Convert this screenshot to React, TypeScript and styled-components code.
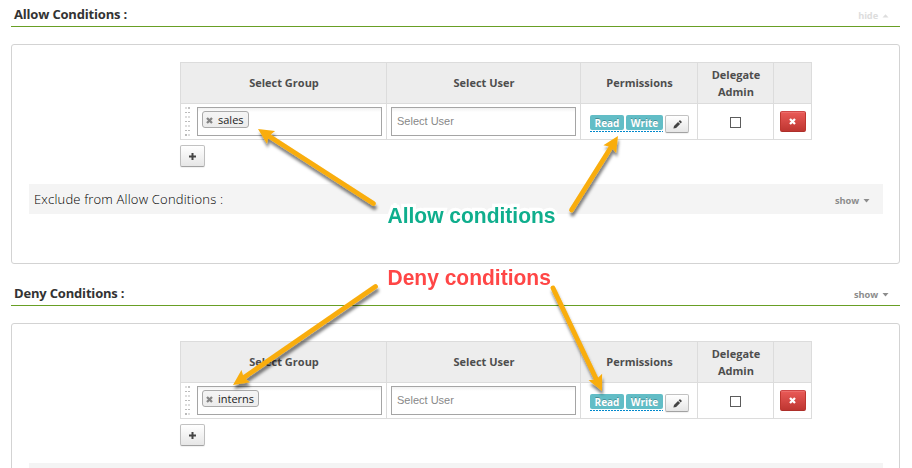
import React from "react";
import styled, { createGlobalStyle } from "styled-components";

const GlobalStyle = createGlobalStyle`
  *, *::before, *::after { box-sizing: border-box; }
  body { margin: 0; background: #fff; overflow: hidden; }
`;

const Page = styled.main`
  position: relative;
  width: 912px;
  height: 468px;
  overflow: hidden;
  padding: 0 12px 0 11px;
  background: #fff;
  color: #333;
  font-family: "Open Sans", sans-serif;
  font-size: 13px;
`;

const Section = styled.section`
  height: 279px;
`;

const SectionHeader = styled.header`
  display: flex;
  justify-content: space-between;
  height: 27px;
  padding: 4px 11px 0 3px;
  border-bottom: 1px solid #689f24;
`;

const SectionTitle = styled.h2`
  margin: 0;
  font-size: 13px;
  line-height: 20px;
  font-weight: 700;
  letter-spacing: -0.18px;
  color: #333;
`;

const Toggle = styled.button<{ $faded?: boolean }>`
  display: flex;
  align-items: center;
  gap: 4px;
  height: 22px;
  padding: 0;
  border: 0;
  background: none;
  font: 700 9.25px/22px "Open Sans", sans-serif;
  letter-spacing: -0.1px;
  color: ${(p) => (p.$faded ? "#dddddd" : "#8c8c8c")};
`;

const HeaderToggle = styled(Toggle)`
  margin-top: 1px;
`;

const Panel = styled.div`
  height: 220px;
  margin-top: 17px;
  padding: 17px 16px 0 17px;
  border: 1px solid #d3d3d3;
  border-radius: 3px;
`;

const Table = styled.div`
  display: grid;
  grid-template-columns: 206px 194px 117px 76px 38px;
  grid-template-rows: 41px 36px;
  width: 632px;
  margin-left: 151px;
  border: 1px solid #dcdcdc;
  border-width: 1px 0 0 1px;
`;

const HeadCell = styled.div<{ $tall?: boolean }>`
  display: flex;
  align-items: center;
  justify-content: center;
  padding: 0 0 ${(p) => (p.$tall ? 0 : 1)}px 1px;
  border: 1px solid #dcdcdc;
  border-width: 0 1px 1px 0;
  background: #ededed;
  color: #4d4d4d;
  font-size: 11px;
  line-height: 17px;
  font-weight: 700;
  text-align: center;
`;

const Cell = styled.div<{ $pad?: string; $center?: boolean }>`
  display: flex;
  align-items: flex-start;
  justify-content: ${(p) => (p.$center ? "center" : "flex-start")};
  padding: ${(p) => p.$pad ?? "3px 4px"};
  border: 1px solid #dcdcdc;
  border-width: 0 1px 1px 0;
`;

const Grip = styled.svg`
  flex: none;
  margin-right: 6px;
`;

const Field = styled.div`
  display: flex;
  align-items: flex-start;
  flex: none;
  width: 185px;
  height: 29px;
  padding: 3px 4px;
  border: 1px solid #a5a5a5;
  background: linear-gradient(#f1f1f1, #fff 4px);
`;

const Placeholder = styled.span`
  padding-left: 1px;
  font: 11px/21px "Liberation Sans", Arial, sans-serif;
  color: #888;
`;

const Tag = styled.span`
  display: flex;
  align-items: center;
  gap: 5px;
  height: 17px;
  padding: 0 4px 0 3px;
  border: 1px solid #aaa;
  border-radius: 3px;
  background: linear-gradient(#f5f5f5, #ececec);
  font-size: 11px;
  line-height: 15px;
  color: #222;
`;

const TagRemove = styled.span`
  display: flex;
  padding-top: 2px;
`;

const Permissions = styled.div`
  display: flex;
  gap: 2px;
  height: 17px;
  margin-right: 2px;
  background: repeating-linear-gradient(90deg, #0088cc 0 2px, transparent 2px 3px) bottom / 100% 1px no-repeat;
`;

const Badge = styled.span<{ $width: number }>`
  width: ${(p) => p.$width}px;
  height: 15px;
  border-radius: 2px;
  background: #62bdc6;
  color: #fff;
  font-size: 10px;
  line-height: 17px;
  font-weight: 700;
  text-align: center;
  text-shadow: 0 -1px 0 rgba(0, 0, 0, 0.25);
`;

const IconButton = styled.button<{ $w: number; $h: number; $danger?: boolean }>`
  display: flex;
  align-items: center;
  justify-content: center;
  width: ${(p) => p.$w}px;
  height: ${(p) => p.$h}px;
  padding: ${(p) => (p.$danger ? "0 1px 0 0" : "0")};
  border: 1px solid;
  border-color: ${(p) => (p.$danger ? "#d04747 #bd362f #ad2f2a" : "#c2c2c2 #bebebe #a2a2a2")};
  border-radius: 2px;
  background: ${(p) => (p.$danger ? "linear-gradient(#ea5a57, #be3631)" : "linear-gradient(#fff, #e6e6e6)")};
  box-shadow: ${(p) => (p.$danger ? "inset 0 1px 0 rgba(255,255,255,.12)" : "0 1px 1px rgba(0,0,0,.06)")};
`;

const AddButton = styled(IconButton)`
  margin: 5px 0 0 151px;
`;

const Checkbox = styled.input`
  appearance: none;
  width: 11px;
  height: 11px;
  margin: 0;
  border: 1px solid #5c5c5c;
  background: #fff;
`;

const ExcludeBar = styled.div`
  display: flex;
  align-items: center;
  justify-content: space-between;
  height: 30px;
  margin-top: 17px;
  padding: 0 13px 0 5px;
  background: #f4f4f4;
`;

const ExcludeTitle = styled.span`
  font-size: 13px;
  line-height: 30px;
  font-weight: 300;
  letter-spacing: 0.19px;
  color: #000;
`;

const ExcludeToggle = styled(Toggle)`
  margin-top: 3px;
`;

const Overlay = styled.svg`
  position: absolute;
  inset: 0;
  pointer-events: none;
`;

const Callout = styled.span<{ $x: number; $y: number; $color: string }>`
  position: absolute;
  left: ${(p) => p.$x}px;
  top: ${(p) => p.$y}px;
  font: 700 21px/26px "Liberation Sans", Arial, sans-serif;
  color: ${(p) => p.$color};
  white-space: nowrap;
  transform: scaleY(1.06);
  -webkit-text-stroke: 6px #fff;
  paint-order: stroke fill;
`;

const Caret = ({ up }: { up?: boolean }) => (
  <svg width="7" height="4" viewBox="0 0 7 4">
    <path d={up ? "M.5 3.5H6.5L3.5 .3Z" : "M.5 0H6.5L3.5 3.6Z"} fill="currentColor" />
  </svg>
);

const Cross = ({ size, color }: { size: number; color: string }) => (
  <svg width={size} height={size} viewBox="0 0 7 7">
    <path d="M1 1L6 6M6 1L1 6" stroke={color} strokeWidth="2.3" />
  </svg>
);

const Plus = () => (
  <svg width="7" height="7" viewBox="0 0 7 7">
    <path d="M3.5 0V7M0 3.5H7" stroke="#444" strokeWidth="2" />
  </svg>
);

const Pencil = () => (
  <svg width="9" height="9" viewBox="0 0 9 9">
    <path d="M.4 8.6L1 5.9L5 1.9L7.1 4L3.1 8ZM5.6 1.3L6.5.4Q7 0 7.5.5L8.5 1.5Q9 2 8.6 2.5L7.7 3.4Z" fill="#444" />
  </svg>
);

const GRIP_ROWS = [
  { y: 0, h: 2, left: "#ddd", right: "#c3c3c3" },
  { y: 5, h: 1, left: "#bbb", right: "#bbb" },
  { y: 9, h: 2, left: "#ddd", right: "#ddd" },
  { y: 14, h: 1, left: "#bbb", right: "#bbb" },
  { y: 18, h: 2, left: "#ddd", right: "#ddd" },
  { y: 23, h: 1, left: "#bbb", right: "#bbb" },
  { y: 27, h: 2, left: "#bbb", right: "#ddd" },
];

const DragGrip = () => (
  <Grip width="6" height="29" shapeRendering="crispEdges">
    {GRIP_ROWS.map((r) => (
      <g key={r.y}>
        <rect x="0" y={r.y} width="2" height={r.h} fill={r.left} />
        <rect x="3" y={r.y} width="2" height={r.h} fill={r.right} />
      </g>
    ))}
  </Grip>
);

type Point = [number, number];

const Arrow = ({ from, to }: { from: Point; to: Point }) => {
  const length = Math.hypot(to[0] - from[0], to[1] - from[1]);
  const angle = (Math.atan2(to[1] - from[1], to[0] - from[0]) * 180) / Math.PI;
  return (
    <g filter="url(#arrowShadow)">
      <g transform={`translate(${from[0]} ${from[1]}) rotate(${angle})`} fill="#f9ad0b">
        <path d={`M0 -2.4H${length - 12}V2.4H0A2.4 2.4 0 0 1 0 -2.4Z`} />
        <path d={`M${length} 0L${length - 15.5} -7.5L${length - 13} 0L${length - 15.5} 7.5Z`} />
      </g>
    </g>
  );
};

interface ConditionSectionProps {
  title: string;
  group: string;
  open?: boolean;
  exclude?: string;
}

const ConditionSection = ({ title, group, open, exclude }: ConditionSectionProps) => (
  <Section>
    <SectionHeader>
      <SectionTitle>{title}</SectionTitle>
      <HeaderToggle $faded={open}>
        {open ? "hide" : "show"} <Caret up={open} />
      </HeaderToggle>
    </SectionHeader>
    <Panel>
      <Table>
        <HeadCell>Select Group</HeadCell>
        <HeadCell>Select User</HeadCell>
        <HeadCell>Permissions</HeadCell>
        <HeadCell $tall>
          Delegate
          <br />
          Admin
        </HeadCell>
        <HeadCell />
        <Cell>
          <DragGrip />
          <Field>
            <Tag>
              <TagRemove>
                <Cross size={7} color="#858585" />
              </TagRemove>
              {group}
            </Tag>
          </Field>
        </Cell>
        <Cell>
          <Field>
            <Placeholder>Select User</Placeholder>
          </Field>
        </Cell>
        <Cell $pad="11px 0 0 9px">
          <Permissions>
            <Badge $width={34}>Read</Badge>
            <Badge $width={37}>Write</Badge>
          </Permissions>
          <IconButton $w={24} $h={18} aria-label="Edit permissions">
            <Pencil />
          </IconButton>
        </Cell>
        <Cell $center $pad="13px 0 0">
          <Checkbox type="checkbox" aria-label="Delegate admin" />
        </Cell>
        <Cell $pad="7px 0 0 6px">
          <IconButton $danger $w={26} $h={21} aria-label="Remove">
            <Cross size={7} color="#fff" />
          </IconButton>
        </Cell>
      </Table>
      <AddButton $w={25} $h={22} aria-label="Add">
        <Plus />
      </AddButton>
      <ExcludeBar>
        {exclude && (
          <>
            <ExcludeTitle>{exclude}</ExcludeTitle>
            <ExcludeToggle>
              show <Caret />
            </ExcludeToggle>
          </>
        )}
      </ExcludeBar>
    </Panel>
  </Section>
);

export default function App() {
  return (
    <>
      <GlobalStyle />
      <Page>
        <ConditionSection
          title="Allow Conditions :"
          group="sales"
          exclude="Exclude from Allow Conditions :"
          open
        />
        <ConditionSection title="Deny Conditions :" group="interns" />
        <Overlay width="912" height="468">
          <defs>
            <filter id="arrowShadow" x="-20%" y="-20%" width="140%" height="150%">
              <feDropShadow dx="1" dy="4" stdDeviation="1.8" floodColor="#000" floodOpacity="0.5" />
            </filter>
          </defs>
          <Arrow from={[373.5, 203.5]} to={[258, 129]} />
          <Arrow from={[571.5, 210]} to={[618, 136]} />
          <Arrow from={[375.5, 286.5]} to={[233, 385]} />
          <Arrow from={[553, 288]} to={[602, 391]} />
        </Overlay>
        <Callout $x={387.5} $y={203} $color="#0fae8d">
          Allow conditions
        </Callout>
        <Callout $x={387.5} $y={265} $color="#ff4646">
          Deny conditions
        </Callout>
      </Page>
    </>
  );
}
